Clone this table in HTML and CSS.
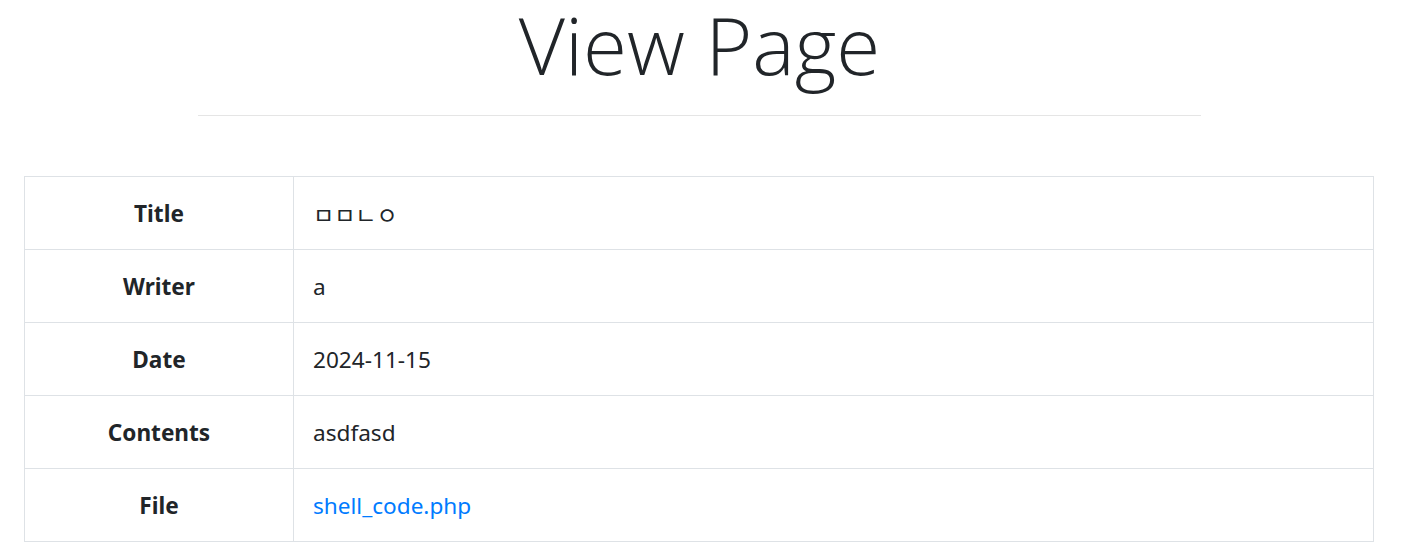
FILE: index.html
```html
<!DOCTYPE html>
<html lang="ko">
<head>
<meta charset="utf-8">
<title>View Page</title>
<link rel="stylesheet" href="styles.css">
</head>
<body>
<main class="page">
  <h1 class="page-title">View Page</h1>
  <hr class="divider">
  <table class="view-table">
    <tbody>
      <tr><th>Title</th><td class="jamo">ㅁㅁㄴㅇ</td></tr>
      <tr><th>Writer</th><td>a</td></tr>
      <tr><th>Date</th><td>2024-11-15</td></tr>
      <tr><th>Contents</th><td>asdfasd</td></tr>
      <tr><th>File</th><td><a class="file-link" href="#">shell_code.php</a></td></tr>
    </tbody>
  </table>
</main>
</body>
</html>
```
FILE: styles.css
```css
html, body {
  margin: 0;
  padding: 0;
  background: #fff;
}
body {
  font-family: "Noto Sans", "Open Sans", "Noto Sans CJK KR", sans-serif;
  color: #212529;
}
.page {
  padding-left: 24px;
  width: 1351px;
}
.page-title {
  margin: 0;
  font-family: "Open Sans", "Noto Sans", sans-serif;
  font-weight: 300;
  font-size: 80px;
  line-height: 88px;
  text-align: center;
}
.divider {
  margin: 27px 174px 60px;
  border: 0;
  border-top: 1px solid #e5e5e5;
  height: 0;
}
.view-table {
  width: 1350px;
  border-collapse: collapse;
  font-size: 22.6px;
  line-height: 36px;
}
.view-table th,
.view-table td {
  border: 1px solid #dee2e6;
  padding: 19px 19px 17px;
  height: 36px;
  vertical-align: middle;
}
.view-table th {
  width: 230px;
  font-weight: 700;
  text-align: center;
}
.view-table td {
  text-align: left;
}
.jamo {
  font-family: "Noto Sans CJK KR", sans-serif;
  font-size: 23px;
}
.file-link {
  color: #007bff;
  text-decoration: none;
}
```
